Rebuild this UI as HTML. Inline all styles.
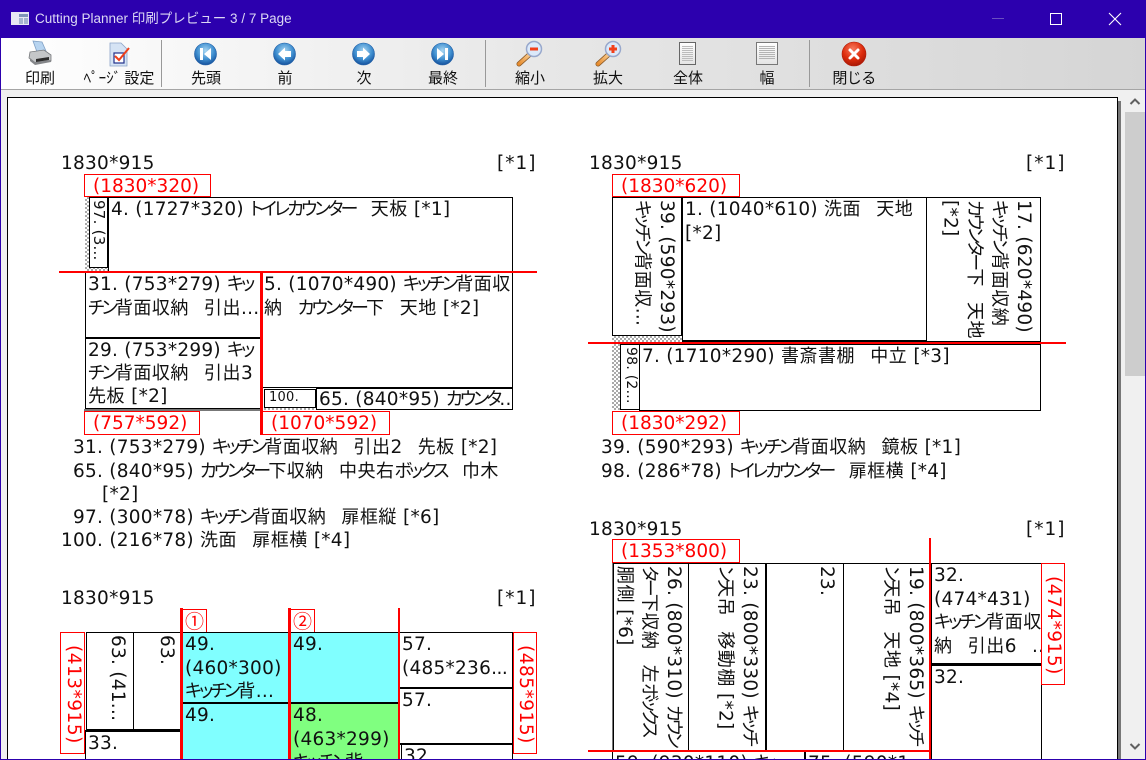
<!DOCTYPE html>
<html lang="ja">
<head>
<meta charset="utf-8">
<title>Cutting Planner</title>
<style>
html,body{margin:0;padding:0;width:1146px;height:760px;overflow:hidden;background:#f0f0f0}
body{position:relative;font-family:"DejaVu Sans","Noto Sans CJK JP",sans-serif;font-feature-settings:"palt";color:#000}
div,svg{position:absolute}
i{font-style:normal;font-size:18px;letter-spacing:-2.8px}
u{text-decoration:none;font-size:18px;letter-spacing:.5px}
#title{left:0;top:0;width:1146px;height:38px;background:#2c00ae}
#ttext{left:35px;top:10px;font:13.5px/18px "Liberation Sans","Noto Sans CJK JP",sans-serif;color:#dcd8f4;white-space:nowrap}
#tool{left:0;top:38px;width:1146px;height:51px;background:linear-gradient(90deg,#fff 0,#e6e6e6 50%,#d5d5d5 100%);border-bottom:1px solid #a5a5a5}
.lb{top:68px;width:90px;text-align:center;font:15px/20px "Noto Sans CJK JP",sans-serif;color:#111;white-space:nowrap}
.sep{top:40px;width:1px;height:47px;background:#999}
#page{left:7px;top:97px;width:1109px;height:670px;background:#fff;border:1px solid #000;box-sizing:content-box}
#shadow{left:1118px;top:101px;width:3px;height:659px;background:#777}
#sb{left:1125px;top:91px;width:20px;height:669px;background:#f0f0f0}
#thumb{left:1125px;top:112px;width:20px;height:264px;background:#cdcdcd}
.t{font-size:18.5px;letter-spacing:.25px;line-height:24px;white-space:nowrap;color:#111}
.br{letter-spacing:1px}
.b{border:1px solid #000;box-sizing:border-box;overflow:hidden;background:#fff;font-size:18.5px;letter-spacing:.25px;line-height:23.5px;white-space:nowrap;padding:0 0 0 2px;color:#111}
.v{writing-mode:vertical-rl;text-orientation:sideways;padding:2px 2px 0 0;line-height:24.5px}
.r{border:1px solid #f00;box-sizing:border-box;color:#f00;font-size:18.5px;line-height:24px;white-space:nowrap;padding-left:8px;background:#fff;overflow:hidden}
.rv{writing-mode:vertical-rl;text-orientation:sideways;padding:12px 0 0 0;line-height:22px;letter-spacing:.5px}
.rl{background:#f00}
.h{background-color:#fff;background-image:linear-gradient(45deg,#aaa 25%,transparent 25%,transparent 75%,#aaa 75%),linear-gradient(45deg,#aaa 25%,transparent 25%,transparent 75%,#aaa 75%);background-size:4px 4px;background-position:0 0,2px 2px}
.g{background:#777}
#bl{left:0;top:759px;width:1146px;height:1px;background:#2c00ae}
#bll{left:0;top:0;width:1px;height:760px;background:#2c00ae}
#blr{left:1145px;top:0;width:1px;height:760px;background:#2c00ae}
</style>
</head>
<body>
<div id="title"></div>
<svg style="left:11px;top:12px" width="18" height="14" viewBox="0 0 18 14"><rect x="0" y="0" width="18" height="13" fill="#e8e8f4"/><rect x="8" y="2" width="9" height="3" fill="#7f93b8"/><rect x="8" y="6" width="4" height="6" fill="#a6b4d0"/><rect x="13" y="6" width="4" height="6" fill="#a6b4d0"/></svg>
<div id="ttext">Cutting Planner 印刷プレビュー 3 / 7 Page</div>
<svg style="left:992px;top:12px" width="140" height="20" viewBox="0 0 140 20"><rect x="0" y="6" width="12" height="1" fill="#6a4fc0"/><rect x="58.500" y="1.500" width="11" height="11" fill="none" stroke="#fff"/><path d="M117 1L129 13M129 1L117 13" stroke="#fff" stroke-width="1.100"/></svg>

<div id="tool"></div>
<div class="sep" style="left:161px"></div>
<div class="sep" style="left:485px"></div>
<div class="sep" style="left:809px"></div>

<svg style="left:0;top:38px" width="880" height="30" viewBox="0 0 880 30">
<defs>
<radialGradient id="bl1" cx="50%" cy="35%" r="65%"><stop offset="0" stop-color="#a8d6f2"/><stop offset=".6" stop-color="#3f8fd0"/><stop offset="1" stop-color="#14509c"/></radialGradient>
<radialGradient id="rd" cx="45%" cy="30%" r="70%"><stop offset="0" stop-color="#f77b60"/><stop offset=".6" stop-color="#de2c0c"/><stop offset="1" stop-color="#a81806"/></radialGradient>
<linearGradient id="pg" x1="0" y1="0" x2="0" y2="1"><stop offset="0" stop-color="#fff"/><stop offset="1" stop-color="#e4e4e4"/></linearGradient>
<linearGradient id="hd" x1="0" y1="1" x2="1" y2="0"><stop offset="0" stop-color="#e88c2e"/><stop offset="1" stop-color="#f6c88a"/></linearGradient>
</defs>
<!-- printer -->
<path d="M33 3L42 4L46 13L37 14Z" fill="#b7d4f0" stroke="#7f9fc4" stroke-width=".8"/>
<path d="M30 14L44 12L51 17V23L35 25L29 20Z" fill="#c4c6c8" stroke="#77797c" stroke-width=".8"/>
<path d="M30 20L35 24L51 22V24L35 27L30 23Z" fill="#85878a"/>
<path d="M36 21L49 19V22L36 24Z" fill="#2d2d2d"/>
<!-- page setup -->
<path d="M110 5H121L127 11V28H110Z" fill="#d5e3f4" stroke="#8ca4c8" stroke-width=".8"/>
<rect x="114" y="15" width="10" height="10" fill="#fff" stroke="#20308a" stroke-width="1.200"/>
<path d="M115 18L119 22L129 10" fill="none" stroke="#f0401a" stroke-width="2"/>
<!-- nav -->
<g fill="url(#bl1)" stroke="#1b5aa3" stroke-width=".6">
<circle cx="205.500" cy="16" r="11"/><circle cx="284.500" cy="16" r="11"/><circle cx="363.500" cy="16" r="11"/><circle cx="442.500" cy="16" r="11"/>
</g>
<g fill="#fff">
<rect x="200" y="10" width="3" height="12"/><path d="M211 10V22L204 16Z"/>
<path d="M278 16L285 9.500V13H291V19H285V22.500Z"/>
<path d="M370 16L363 9.500V13H357V19H363V22.500Z"/>
<rect x="445" y="10" width="3" height="12"/><path d="M437 10V22L444 16Z"/>
</g>
<!-- zoom -->
<g>
<path d="M519 26L529 17" stroke="#8a5a28" stroke-width="5" stroke-linecap="round"/>
<path d="M519 26L529 17" stroke="url(#hd)" stroke-width="3.500" stroke-linecap="round"/>
<circle cx="534" cy="11" r="7.500" fill="#dbe9fa" stroke="#98a8cc" stroke-width="1.500"/>
<rect x="530" y="9.500" width="8" height="3" fill="#f2401a"/>
<path d="M598 26L608 17" stroke="#8a5a28" stroke-width="5" stroke-linecap="round"/>
<path d="M598 26L608 17" stroke="url(#hd)" stroke-width="3.500" stroke-linecap="round"/>
<circle cx="613" cy="11" r="7.500" fill="#dbe9fa" stroke="#98a8cc" stroke-width="1.500"/>
<rect x="609" y="9.500" width="8" height="3" fill="#f2401a"/><rect x="611.500" y="7" width="3" height="8" fill="#f2401a"/>
</g>
<!-- pages -->
<rect x="679.500" y="4.500" width="16" height="22" fill="url(#pg)" stroke="#666"/>
<g stroke="#bcbcbc"><path d="M682 8.500H693M682 10.500H693M682 12.500H693M682 14.500H693M682 16.500H693M682 18.500H693M682 20.500H693M682 22.500H693"/></g>
<rect x="756.500" y="4.500" width="21" height="22" fill="url(#pg)" stroke="#777"/>
<g stroke="#b4b4b4"><path d="M759 8.500H775M759 10.500H775M759 12.500H775M759 14.500H775M759 16.500H775M759 18.500H775M759 20.500H775"/></g>
<!-- close -->
<circle cx="854" cy="16" r="12" fill="url(#rd)" stroke="#b01c08" stroke-width=".6"/>
<path d="M850 12L858 20M858 12L850 20" stroke="#fff" stroke-width="3" stroke-linecap="round"/>
</svg>

<div class="lb" style="left:-5px">印刷</div>
<div class="lb" style="left:74px;font-feature-settings:normal">ﾍﾟｰｼﾞ 設定</div>
<div class="lb" style="left:161px">先頭</div>
<div class="lb" style="left:240px">前</div>
<div class="lb" style="left:319px">次</div>
<div class="lb" style="left:398px">最終</div>
<div class="lb" style="left:485px">縮小</div>
<div class="lb" style="left:563px">拡大</div>
<div class="lb" style="left:643px">全体</div>
<div class="lb" style="left:722px">幅</div>
<div class="lb" style="left:809px;letter-spacing:-.6px">閉じる</div>

<div id="page"></div>
<div id="shadow"></div>
<div id="sb"></div>
<div id="thumb"></div>
<svg style="left:1125px;top:95px" width="20" height="12" viewBox="0 0 20 12"><path d="M5.500 9L10 4.500L14.500 9" fill="none" stroke="#606060" stroke-width="2"/></svg>
<svg style="left:1125px;top:741px" width="20" height="12" viewBox="0 0 20 12"><path d="M5.500 3L10 7.500L14.500 3" fill="none" stroke="#606060" stroke-width="2"/></svg>

<!-- panel 1 -->
<div class="t" style="left:61px;top:152px">1830*915</div>
<div class="t br" style="left:497px;top:152px">[*1]</div>
<div class="r" style="left:84px;top:174px;width:127px;height:23px">(1830*320)</div>
<div class="h" style="left:85px;top:197px;width:23px;height:74px"></div>
<div class="b v" style="left:89px;top:197px;width:19px;height:71px;padding-right:0;font-size:15px;line-height:17px">97. (3...</div>
<div class="b" style="left:108px;top:197px;width:405px;height:75px">4. (1727*320) <i>トイレカウンター　</i><u>天板</u> [*1]</div>
<div class="b" style="left:85px;top:272px;width:177px;height:66px">31. (753*279) <i>キッ</i><br><i>チン</i><u>背面収納</u><i>　</i><u>引出</u>...</div>
<div class="b" style="left:85px;top:337px;width:177px;height:72px;border-top-width:2px;line-height:23px">29. (753*299) <i>キッ</i><br><i>チン</i><u>背面収納</u><i>　</i><u>引出</u>3<br><u>先板</u> [*2]</div>
<div class="b" style="left:261px;top:272px;width:252px;height:116px">5. (1070*490) <i>キッチン</i><u>背面収</u><br><u>納</u><i>　カウンター</i><u>下</u><i>　</i><u>天地</u> [*2]</div>
<div class="b" style="left:264px;top:389px;width:52px;height:19px;font-size:13px;line-height:15px;padding-left:4px">100.</div>
<div class="h" style="left:262px;top:408px;width:54px;height:2px"></div>
<div class="b" style="left:316px;top:388px;width:197px;height:22px;line-height:21px">65. (840*95) <i>カウンタ</i>...</div>
<div class="g" style="left:84px;top:409px;width:177px;height:2px"></div>
<div class="r" style="left:84px;top:411px;width:116px;height:24px">(757*592)</div>
<div class="r" style="left:262px;top:411px;width:128px;height:24px">(1070*592)</div>
<div class="rl" style="left:59px;top:271px;width:478px;height:2px"></div>
<div class="rl" style="left:260px;top:271px;width:3px;height:164px"></div>
<div class="t" style="left:73px;top:436px">31. (753*279) <i>キッチン</i><u>背面収納</u><i>　</i><u>引出</u>2<i>　</i><u>先板</u> [*2]</div>
<div class="t" style="left:73px;top:460px">65. (840*95) <i>カウンター</i><u>下収納</u><i>　</i><u>中央右</u><i>ボックス　</i><u>巾木</u></div>
<div class="t" style="left:102px;top:483px">[*2]</div>
<div class="t" style="left:73px;top:506px">97. (300*78) <i>キッチン</i><u>背面収納</u><i>　</i><u>扉框縦</u> [*6]</div>
<div class="t" style="left:61px;top:529px">100. (216*78) <u>洗面</u><i>　</i><u>扉框横</u> [*4]</div>

<!-- panel 2 -->
<div class="t" style="left:589px;top:152px">1830*915</div>
<div class="t br" style="left:1026px;top:152px">[*1]</div>
<div class="r" style="left:612px;top:174px;width:128px;height:23px">(1830*620)</div>
<div class="b v" style="left:612px;top:197px;width:70px;height:139px;padding-right:3px">39. (590*293)<br><i>キッチン</i><u>背面収</u>...</div>
<div class="h" style="left:612px;top:336px;width:70px;height:6px"></div>
<div class="b" style="left:682px;top:197px;width:245px;height:145px;border-bottom-width:2px">1. (1040*610) <u>洗面</u><i>　</i><u>天地</u><br>[*2]</div>
<div class="b v" style="left:926px;top:197px;width:115px;height:145px;padding-right:5px">17. (620*490)<br><i>キッチン</i><u>背面収納</u><br><i>カウンター</i><u>下</u><i>　</i><u>天地</u><br>[*2]</div>
<div class="rl" style="left:588px;top:342px;width:478px;height:2px"></div>
<div class="h" style="left:612px;top:344px;width:9px;height:66px"></div>
<div class="b v" style="left:620px;top:344px;width:20px;height:66px;font-size:14px;line-height:17px;padding:2px 0 0 0">98. (2...</div>
<div class="b" style="left:639px;top:344px;width:402px;height:67px">7. (1710*290) <u>書斎書棚</u><i>　</i><u>中立</u> [*3]</div>
<div class="r" style="left:612px;top:411px;width:128px;height:24px">(1830*292)</div>
<div class="t" style="left:601px;top:436px">39. (590*293) <i>キッチン</i><u>背面収納</u><i>　</i><u>鏡板</u> [*1]</div>
<div class="t" style="left:601px;top:460px">98. (286*78) <i>トイレカウンター　</i><u>扉框横</u> [*4]</div>

<!-- panel 3 -->
<div class="t" style="left:61px;top:587px">1830*915</div>
<div class="t br" style="left:497px;top:587px">[*1]</div>
<div class="r" style="left:181px;top:609px;width:26px;height:24px;padding-left:3px;font-family:'Noto Sans CJK JP',sans-serif;font-size:19px;line-height:22px">①</div>
<div class="r" style="left:289px;top:609px;width:26px;height:24px;padding-left:3px;font-family:'Noto Sans CJK JP',sans-serif;font-size:19px;line-height:22px">②</div>
<div class="r rv" style="left:60px;top:632px;width:25px;height:122px">(413*915)</div>
<div class="b v" style="left:86px;top:632px;width:48px;height:98px;padding-right:4px">63. (41...</div>
<div class="b v" style="left:133px;top:632px;width:49px;height:98px;padding-right:3px">63.</div>
<div class="b" style="left:85px;top:730px;width:97px;height:40px;border-top-width:2px">33.</div>
<div class="b" style="left:182px;top:632px;width:108px;height:72px;background:#80ffff">49.<br>(460*300)<br><i>キッチン</i><u>背</u>...</div>
<div class="b" style="left:182px;top:702px;width:108px;height:68px;background:#80ffff;border-top-width:2px">49.</div>
<div class="b" style="left:290px;top:632px;width:109px;height:72px;background:#80ffff">49.</div>
<div class="b" style="left:290px;top:702px;width:109px;height:68px;background:#80ff80;border-top-width:2px">48.<br>(463*299)<br><i>キッチン</i><u>背</u>...</div>
<div class="b" style="left:399px;top:632px;width:114px;height:57px;border-bottom-width:2px">57.<br>(485*236<span style="letter-spacing:-.5px">...</span></div>
<div class="b" style="left:399px;top:688px;width:114px;height:57px;border-bottom-width:2px">57.</div>
<div class="b" style="left:401px;top:744px;width:112px;height:30px">32.</div>
<div class="r rv" style="left:513px;top:632px;width:24px;height:122px">(485*915)</div>
<div class="rl" style="left:180px;top:608px;width:3px;height:152px"></div>
<div class="rl" style="left:288px;top:608px;width:3px;height:152px"></div>
<div class="rl" style="left:398px;top:608px;width:2px;height:152px"></div>

<!-- panel 4 -->
<div class="t" style="left:589px;top:518px">1830*915</div>
<div class="t br" style="left:1026px;top:518px">[*1]</div>
<div class="r" style="left:612px;top:539px;width:128px;height:24px">(1353*800)</div>
<div class="g" style="left:612px;top:563px;width:2px;height:187px"></div>
<div class="b v" style="left:613px;top:563px;width:76px;height:188px;padding-right:3px;border-bottom:0">26. (800*310) <i>カウン</i><br><i>ター</i><u>下収納</u><i>　</i><u>左</u><i>ボックス</i><br><u>胴側</u> [*6]</div>
<div class="b v" style="left:688px;top:563px;width:78px;height:188px;padding-right:4px;border-bottom:0">23. (800*330) <i>キッチ</i><br><i>ン</i><u>天吊</u><i>　</i><u>移動棚</u> [*2]</div>
<div class="b v" style="left:766px;top:563px;width:78px;height:188px;padding-right:5px;border-bottom:0">23.</div>
<div class="b v" style="left:843px;top:563px;width:87px;height:188px;padding-right:2px;border-bottom:0">19. (800*365) <i>キッチ</i><br><i>ン</i><u>天吊</u><i>　</i><u>天地</u> [*4]</div>
<div class="b" style="left:612px;top:751px;width:193px;height:30px">59. (930*110) <i>キッ</i></div>
<div class="b" style="left:805px;top:751px;width:125px;height:30px">75. (590*1</div>
<div class="b" style="left:931px;top:563px;width:111px;height:102px;border-bottom-width:2px;padding-right:0">32.<br>(474*431)<br><i>キッチン</i><u>背面収</u><br><u>納</u><i>　</i><u>引出</u>6<i>　</i>...</div>
<div class="b" style="left:931px;top:664px;width:111px;height:106px;border-top-width:2px">32.</div>
<div class="r rv" style="left:1041px;top:563px;width:24px;height:122px">(474*915)</div>
<div class="rl" style="left:588px;top:750px;width:342px;height:2px"></div>
<div class="rl" style="left:929px;top:538px;width:2px;height:222px"></div>

<div id="bl"></div><div id="bll"></div><div id="blr"></div>
</body>
</html>
